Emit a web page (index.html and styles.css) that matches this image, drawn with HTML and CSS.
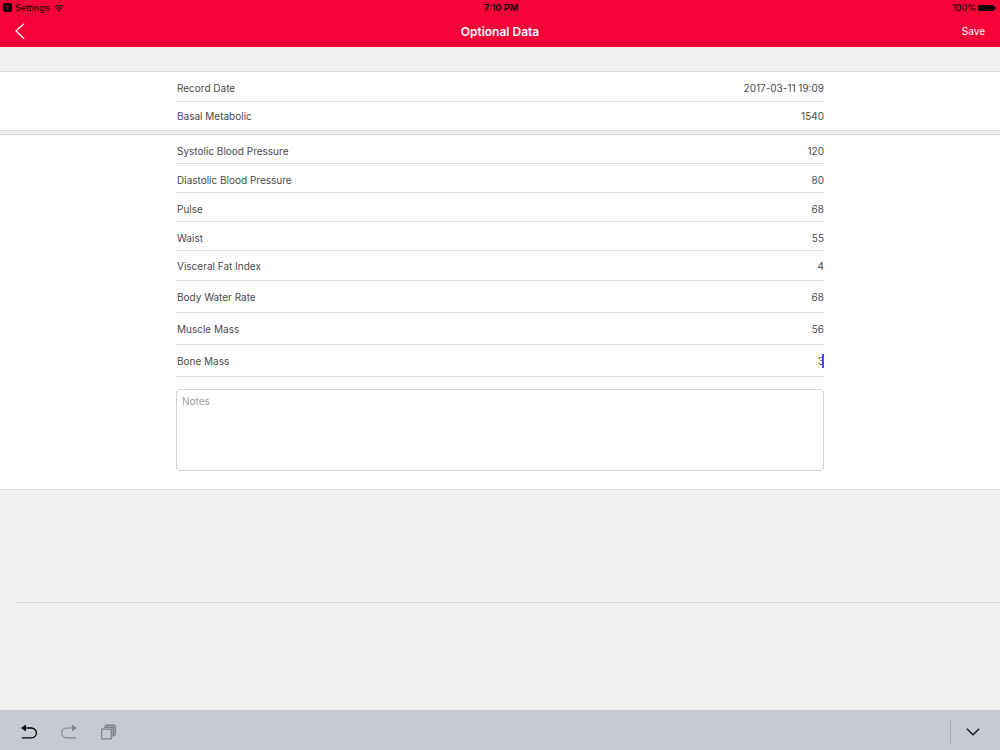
FILE: index.html
```html
<!DOCTYPE html>
<html lang="en">
<head>
<meta charset="utf-8">
<title>Optional Data</title>
<link rel="stylesheet" href="styles.css">
</head>
<body>
<header class="top">
  <div class="status">
    <div class="status-left">
      <svg class="back-app" viewBox="0 0 9 9"><rect width="9" height="9" rx="2"/><path d="M5.5 2.2 3.2 4.5l2.3 2.3" fill="none" stroke="#f80038"/></svg>
      <span>Settings</span>
      <svg class="wifi" viewBox="0 0 18 14" fill="none" stroke="#000" stroke-width="2"><path d="M1.500 5.500C5.500 1 12.500 1 16.500 5.500M4.500 8.500c2.500-2.600 6.500-2.600 9 0"/><path d="M9 13.500 6.300 10.800c1.500-1.400 3.900-1.400 5.400 0z" fill="#000" stroke="none"/></svg>
    </div>
    <span class="clock">7:10 PM</span>
    <div class="status-right">
      <span>100%</span>
      <svg class="battery" viewBox="0 0 18 8"><rect width="16" height="6" y="1" rx="1.500"/><rect x="16.500" y="2.500" width="1.200" height="3" rx=".6"/></svg>
    </div>
  </div>
  <nav class="nav">
    <button class="nav-back" type="button" aria-label="Back"><svg viewBox="0 0 10 18" fill="none" stroke="#fff" stroke-width="1.200"><path d="M9.200 1.500 1 9l8.200 7.800"/></svg></button>
    <h1 class="title">Optional Data</h1>
    <button class="save" type="button">Save</button>
  </nav>
</header>
<main class="content">
  <section class="card">
    <div class="fields">
      <div class="row first"><label for="date">Record Date</label><input id="date" value="2017-03-11 19:09"></div>
      <div class="row last"><label for="basal">Basal Metabolic</label><input id="basal" value="1540"></div>
    </div>
  </section>
  <section class="card">
    <div class="fields">
      <div class="row drop"><label for="sys">Systolic Blood Pressure</label><input id="sys" value="120"></div>
      <div class="row drop"><label for="dia">Diastolic Blood Pressure</label><input id="dia" value="80"></div>
      <div class="row drop"><label for="pulse">Pulse</label><input id="pulse" value="68"></div>
      <div class="row drop"><label for="waist">Waist</label><input id="waist" value="55"></div>
      <div class="row mid"><label for="fat">Visceral Fat Index</label><input id="fat" value="4"></div>
      <div class="row tall"><label for="water">Body Water Rate</label><input id="water" value="68"></div>
      <div class="row tall"><label for="muscle">Muscle Mass</label><input id="muscle" value="56"></div>
      <div class="row tall"><label for="bone">Bone Mass</label><input id="bone" value="3"><span class="caret"></span></div>
      <textarea class="notes" placeholder="Notes" aria-label="Notes"></textarea>
    </div>
  </section>
  <hr class="divider">
</main>
<footer class="toolbar">
  <button type="button" aria-label="Undo"><svg class="tool" viewBox="0 0 16 16" fill="none" stroke="#000" stroke-width="1.300"><path d="M3 4h7.500a4.600 4.600 0 0 1 0 9.800H1"/><path d="M0 4 5 .5v7z" fill="#000" stroke="none"/></svg></button>
  <button type="button" aria-label="Redo"><svg class="tool" viewBox="0 0 16 16" fill="none" stroke="#83868b" stroke-width="1.200"><path d="M13 4H5.500a4.600 4.600 0 0 0 0 9.800H15"/><path d="m16 4-5-3.500v7z" fill="#83868b" stroke="none"/></svg></button>
  <button type="button" aria-label="Paste"><svg class="tool" viewBox="0 0 16 16" fill="none" stroke="#7c7f83"><path d="M.7 5.200h9.600v9.600H.7z" stroke-width="1.200"/><path d="M3.200 3.300h9v9.500" stroke-width="1.500"/><path d="M4.200 2.500Q4.300 1.200 5.600 1.200H13q1.200 0 1.200 1.200v7.400q0 1.200-1.200 1.400" stroke-width="1.500"/></svg></button>
  <button class="hide" type="button" aria-label="Hide keyboard"><svg class="chevron" viewBox="0 0 14 8" fill="none" stroke="#16181b" stroke-width="1.400"><path d="m.8.8 6.200 6 6.200-6"/></svg></button>
</footer>
</body>
</html>
```
FILE: styles.css
```css
* { box-sizing: border-box; }
body {
  margin: 0;
  min-height: 100vh;
  display: flex;
  flex-direction: column;
  background: #f1f1f1;
  color: #4a4a4a;
  font-family: Inter, "Liberation Sans", sans-serif;
  font-size: 10px;
}
button {
  display: flex;
  align-items: center;
  padding: 0;
  border: 0;
  background: none;
  font: inherit;
}
.top {
  height: 47px;
  background: #f80038;
}
.status {
  display: grid;
  grid-template-columns: 1fr auto 1fr;
  align-items: center;
  height: 15px;
  padding: 0 4px 0 3px;
  color: #000;
  font-size: 9px;
}
.clock { padding-left: 3px; font-weight: 600; }
.status-left, .status-right {
  display: flex;
  align-items: center;
  gap: 3px;
}
.status-right { justify-content: flex-end; gap: 2px; }
.back-app { width: 9px; height: 9px; }
.wifi { width: 10px; height: 8px; margin-left: 2px; }
.battery { width: 18px; height: 8px; }
.nav {
  display: grid;
  grid-template-columns: 1fr auto 1fr;
  align-items: center;
  height: 32px;
  padding: 0 15px;
  color: #fff;
}
.nav-back svg { width: 10px; height: 18px; }
.title { margin: 0; font-size: 12px; font-weight: 600; }
.save { justify-self: end; color: #fff; }
.content { flex: 1; padding-top: 24px; }
.card {
  margin-bottom: 3px;
  border-top: 1px solid #dcdcdc;
  border-bottom: 1px solid #dcdcdc;
  background: #fff;
}
.fields { width: 65%; max-width: 648px; margin: 0 auto; }
.row {
  position: relative;
  display: flex;
  align-items: center;
  justify-content: space-between;
  height: 29px;
  padding-left: 1px;
  border-bottom: 1px solid #dfdfdf;
}
.first { height: 30px; padding-top: 3px; }
.last { height: 28px; border-bottom: 0; }
.drop { padding-top: 4px; }
.mid { height: 30px; }
.tall { height: 32px; }
.row input {
  width: 120px;
  padding: 0;
  border: 0;
  outline: 0;
  background: none;
  color: inherit;
  font: inherit;
  text-align: right;
}
.caret {
  position: absolute;
  right: 0;
  top: 9px;
  width: 2px;
  height: 14px;
  background: #3355ee;
}
.notes {
  display: block;
  width: 100%;
  height: 82px;
  margin: 12px 0 18px;
  padding: 5px;
  border: 1px solid #d2d2d2;
  border-radius: 4px;
  background: #fff;
  font: inherit;
  resize: none;
}
.notes::placeholder { color: #a0a0a0; }
.divider {
  margin: 112px 0 0 15px;
  border: 0;
  border-top: 1px solid #d9d9d9;
}
.toolbar {
  display: flex;
  align-items: center;
  gap: 24px;
  height: 40px;
  padding: 4px 20px 0 21px;
  background: #c7cad2;
}
.tool { width: 16px; height: 16px; }
.hide {
  height: 24px;
  margin-left: auto;
  padding-left: 15px;
  border-left: 1px solid #a6a9ad;
}
.chevron { width: 14px; height: 8px; }
```
